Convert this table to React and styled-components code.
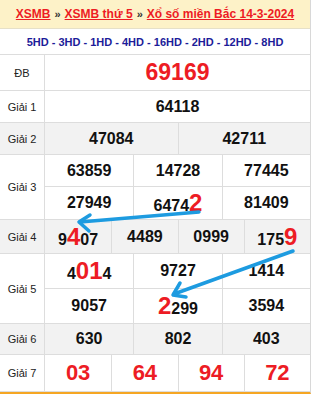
import React from "react";
import styled, { createGlobalStyle } from "styled-components";

const Global = createGlobalStyle`
  html, body { margin: 0; padding: 0; background: #fff; }
  body { font-family: "Liberation Sans", Arial, sans-serif; }
`;

const Wrapper = styled.div`
  position: relative;
  width: 311px;
  border-right: 1px solid #d8d8d8;
  border-bottom: 2px solid #f5a623;
  box-sizing: border-box;
`;

const Header = styled.div`
  height: 28px;
  background: #fdf2c8;
  border-bottom: 1px solid #e6e0c8;
  display: flex;
  align-items: center;
  justify-content: center;
  font-size: 12px;
  font-weight: bold;
  color: #222;
  white-space: nowrap;
`;

const Crumb = styled.a`
  color: #ed1c24;
  text-decoration: underline;
  cursor: pointer;
`;

const Sep = styled.span`
  margin: 0 4px;
  color: #333;
  font-size: 11px;
`;

const DayRow = styled.div`
  height: 25px;
  border-bottom: 1px solid #dddddd;
  display: flex;
  align-items: center;
  justify-content: center;
  font-size: 11px;
  font-weight: bold;
  color: #1c1c99;
  white-space: nowrap;
`;

const Row = styled.div`
  display: grid;
  grid-template-columns: 45px 1fr;
  background: ${(p) => (p.$alt ? "#f2f2f2" : "#fff")};
  border-bottom: 1px solid #dddddd;
`;

const Label = styled.div`
  display: flex;
  align-items: center;
  justify-content: center;
  font-size: 11px;
  color: #222;
  border-right: 1px solid #dddddd;
`;

const Lines = styled.div`
  display: flex;
  flex-direction: column;
`;

const Cells = styled.div`
  display: grid;
  grid-template-columns: repeat(${(p) => p.$n}, 1fr);
  height: ${(p) => p.$h}px;
  border-top: ${(p) => (p.$first ? "none" : "1px solid #dddddd")};
`;

const Cell = styled.div`
  display: flex;
  align-items: center;
  justify-content: center;
  font-weight: bold;
  font-size: ${(p) => p.$size || 16}px;
  color: ${(p) => (p.$red ? "#ed1c24" : "#111")};
  border-left: ${(p) => (p.$first ? "none" : "1px solid #dddddd")};
`;

const Num = styled.div`
  display: flex;
  align-items: baseline;
  line-height: 1;
`;

const Digit = styled.span`
  color: ${(p) => (p.$big ? "#ed1c24" : "inherit")};
  font-size: ${(p) => (p.$big ? "24px" : "inherit")};
`;

const Arrows = styled.svg`
  position: absolute;
  left: 0;
  top: 0;
  pointer-events: none;
`;

const parse = (v) =>
  v.split("|").map((t, i) => ({ text: t, big: i % 2 === 1 }));

const Prize = ({ label, lines, alt, size, red }) => (
  <Row $alt={alt}>
    <Label>{label}</Label>
    <Lines>
      {lines.map((line, i) => (
        <Cells key={i} $n={line.values.length} $h={line.h} $first={i === 0}>
          {line.values.map((v, j) => (
            <Cell key={j} $size={size} $red={red} $first={j === 0}>
              <Num>
                {parse(v)
                  .filter((p) => p.text.length > 0)
                  .map((p, k) => (
                    <Digit key={k} $big={p.big}>
                      {p.text}
                    </Digit>
                  ))}
              </Num>
            </Cell>
          ))}
        </Cells>
      ))}
    </Lines>
  </Row>
);

export default function App() {
  return (
    <>
      <Global />
      <Wrapper>
        <Header>
          <Crumb>XSMB</Crumb>
          <Sep>»</Sep>
          <Crumb>XSMB thứ 5</Crumb>
          <Sep>»</Sep>
          <Crumb>Xổ số miền Bắc 14-3-2024</Crumb>
        </Header>
        <DayRow>5HD - 3HD - 1HD - 4HD - 16HD - 2HD - 12HD - 8HD</DayRow>
        <Prize label="ĐB" size={23} red lines={[{ h: 35, values: ["69169"] }]} />
        <Prize label="Giải 1" lines={[{ h: 31, values: ["64118"] }]} />
        <Prize alt label="Giải 2" lines={[{ h: 31, values: ["47084", "42711"] }]} />
        <Prize
          label="Giải 3"
          lines={[
            { h: 31, values: ["63859", "14728", "77445"] },
            { h: 32, values: ["27949", "6474|2", "81409"] },
          ]}
        />
        <Prize
          alt
          label="Giải 4"
          lines={[{ h: 33, values: ["9|4|07", "4489", "0999", "175|9"] }]}
        />
        <Prize
          label="Giải 5"
          lines={[
            { h: 34, values: ["4|01|4", "9727", "1414"] },
            { h: 34, values: ["9057", "|2|299", "3594"] },
          ]}
        />
        <Prize alt label="Giải 6" lines={[{ h: 30, values: ["630", "802", "403"] }]} />
        <Prize
          label="Giải 7"
          size={22}
          red
          lines={[{ h: 36, values: ["03", "64", "94", "72"] }]}
        />
        <Arrows width="314" height="394" viewBox="0 0 314 394">
          <g stroke="#1d9be0" strokeWidth="3.5" strokeLinecap="round" fill="none">
            <line x1="199" y1="212" x2="80" y2="222" />
            <polyline points="90,215 79,222 89,231" strokeLinejoin="round" />
            <line x1="293" y1="251" x2="174" y2="294" />
            <polyline points="180,283 173,295 186,297" strokeLinejoin="round" />
          </g>
        </Arrows>
      </Wrapper>
    </>
  );
}
